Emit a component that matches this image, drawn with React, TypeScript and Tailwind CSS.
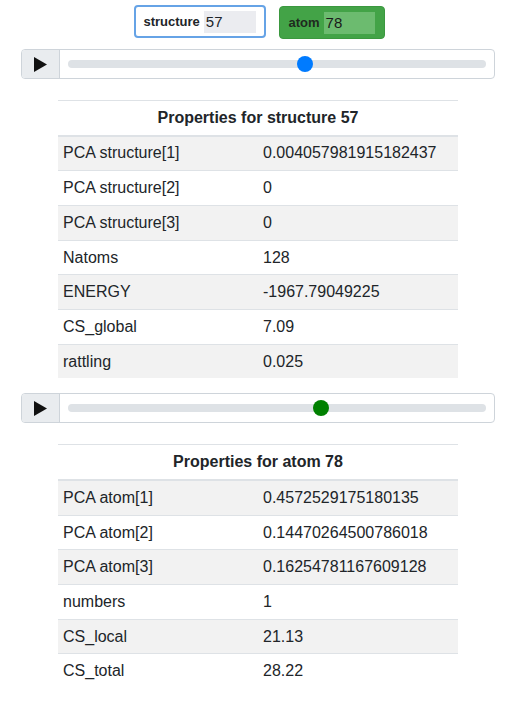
import React from 'react';

type Row = [string, string];

const structureRows: Row[] = [
  ['PCA structure[1]', '0.004057981915182437'],
  ['PCA structure[2]', '0'],
  ['PCA structure[3]', '0'],
  ['Natoms', '128'],
  ['ENERGY', '-1967.79049225'],
  ['CS_global', '7.09'],
  ['rattling', '0.025'],
];

const atomRows: Row[] = [
  ['PCA atom[1]', '0.4572529175180135'],
  ['PCA atom[2]', '0.14470264500786018'],
  ['PCA atom[3]', '0.16254781167609128'],
  ['numbers', '1'],
  ['CS_local', '21.13'],
  ['CS_total', '28.22'],
];

function Player({ pct, thumb }: { pct: number; thumb: string }) {
  return (
    <div className="flex h-[30px] w-[474px] rounded border border-[#ced4da] overflow-hidden">
      <div className="w-[38px] bg-[#e9ecef] border-r border-[#ced4da] flex items-center justify-center">
        <svg width="15" height="17" viewBox="0 0 15 17">
          <polygon points="1,1 14,8.5 1,16" fill="#111" />
        </svg>
      </div>
      <div className="flex-1 flex items-center px-[8px]">
        <div className="relative w-full h-[8px] rounded-full bg-[#dee2e6]">
          <div
            className={`absolute top-1/2 -translate-y-1/2 w-[16px] h-[16px] rounded-full ${thumb}`}
            style={{ left: `calc(${pct}% - 8px)` }}
          />
        </div>
      </div>
    </div>
  );
}

function PropTable({ title, rows }: { title: string; rows: Row[] }) {
  return (
    <table className="w-[400px] mx-auto text-[16px] leading-6 text-[#212529]">
      <thead>
        <tr>
          <th colSpan={2} className="border-t border-b-2 border-[#dee2e6] py-[4.8px] px-[5px] font-bold text-center">
            {title}
          </th>
        </tr>
      </thead>
      <tbody>
        {rows.map(([k, v], i) => (
          <tr key={k} className={i % 2 === 0 ? 'bg-[#f2f2f2]' : ''}>
            <td className={`w-1/2 py-[4.85px] px-[5px] ${i > 0 ? 'border-t border-[#dee2e6]' : ''}`}>{k}</td>
            <td className={`w-1/2 py-[4.85px] px-[5px] ${i > 0 ? 'border-t border-[#dee2e6]' : ''}`}>{v}</td>
          </tr>
        ))}
      </tbody>
    </table>
  );
}

export default function App() {
  return (
    <div className="bg-white min-h-[720px] pl-[21px] pt-[5px]" style={{ fontFamily: '"Liberation Sans", Arial, sans-serif' }}>
      <div className="w-[474px]">
        {/* selectors */}
        <div className="flex justify-center gap-[13px] pl-[2px]">
          <div className="flex items-center h-[33px] w-[132px] px-[8px] gap-[4px] rounded border-2 border-[#66a3e6] bg-white">
            <span className="text-[13px] font-bold text-[#212529]">structure</span>
            <div className="h-[22px] w-[52px] bg-[#ebecf0] text-[15px] leading-[22px] pl-[2px] text-[#212529]">57</div>
          </div>
          <div className="flex items-center h-[33px] w-[106px] mt-[1px] px-[9px] gap-[4px] rounded border border-[#3b983f] bg-[#43a347]">
            <span className="text-[13px] font-bold text-[#1f2a1f]">atom</span>
            <div className="h-[22px] w-[52px] bg-[#6cbb6f] text-[15px] leading-[22px] pl-[2px] text-[#1a1a1a]">78</div>
          </div>
        </div>

        <div className="mt-[10px] mb-[21px]">
          <Player pct={56.6} thumb="bg-[#007bff]" />
        </div>
        <PropTable title="Properties for structure 57" rows={structureRows} />

        <div className="mt-[15px] mb-[21px]">
          <Player pct={60.5} thumb="bg-[#008000]" />
        </div>
        <PropTable title="Properties for atom 78" rows={atomRows} />
      </div>
    </div>
  );
}
